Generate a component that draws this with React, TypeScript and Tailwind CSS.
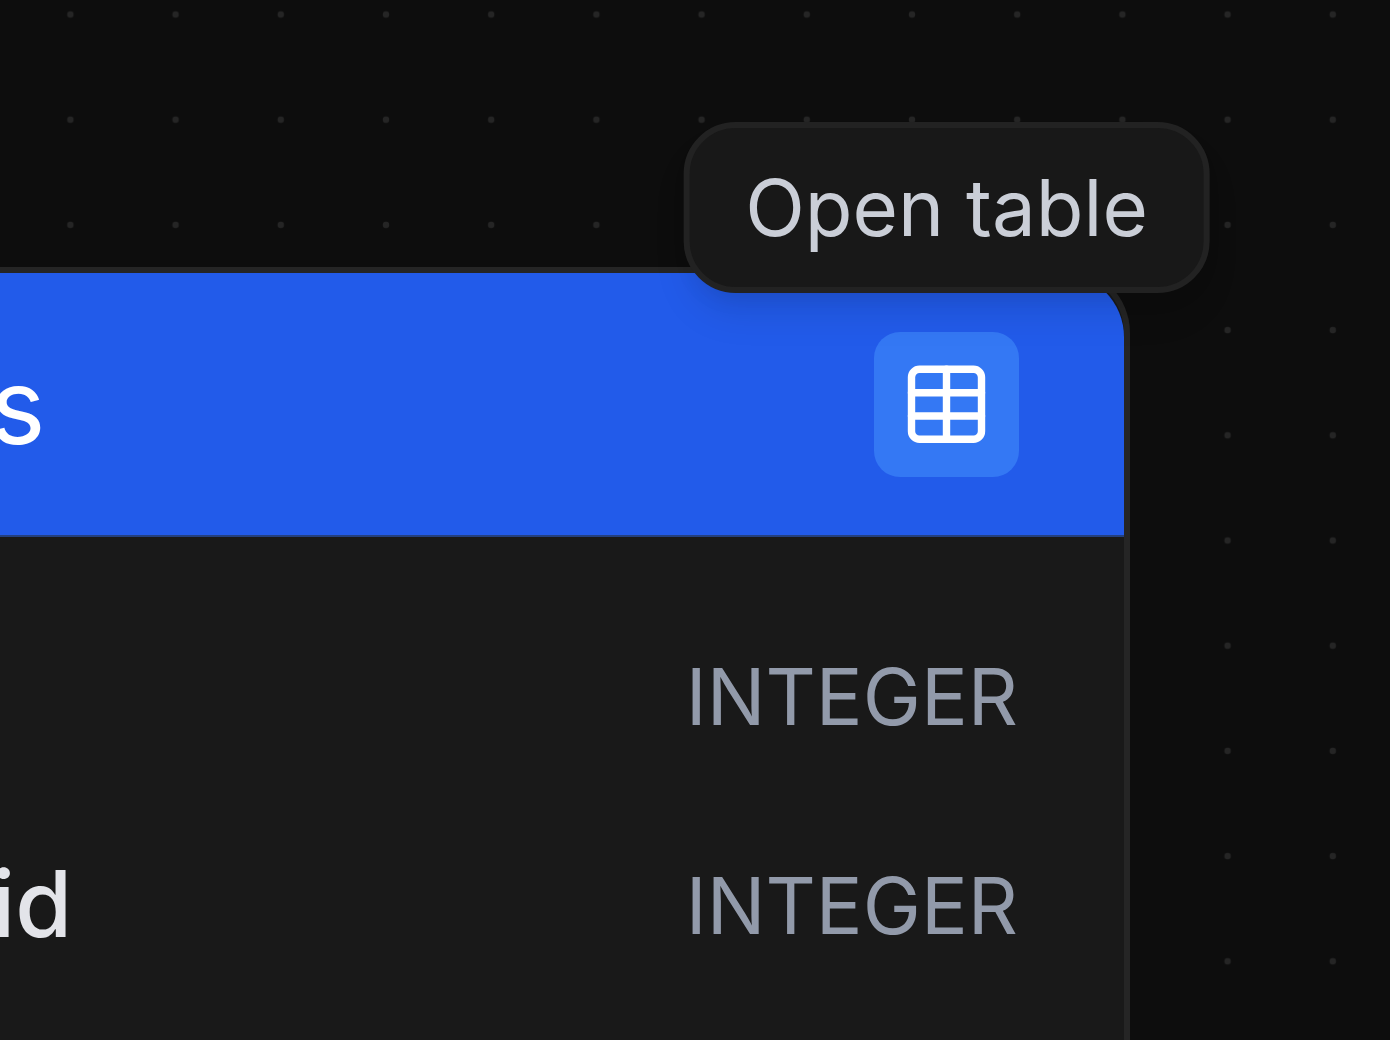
import React from "react";

interface Column {
  id: number;
  name: string;
  type: string;
}

const columns: Column[] = [
  { id: 1, name: "", type: "INTEGER" },
  { id: 2, name: "id", type: "INTEGER" },
];

// Dotted canvas behind the table nodes
const CanvasDots: React.FC = () => (
  <svg className="absolute inset-0 h-full w-full" aria-hidden="true">
    <defs>
      <pattern
        id="dots"
        x="17.8"
        y="-38.1"
        width="105.2"
        height="105.2"
        patternUnits="userSpaceOnUse"
      >
        <circle cx="52.6" cy="52.6" r="3.2" fill="#252525" />
      </pattern>
    </defs>
    <rect width="100%" height="100%" fill="url(#dots)" />
  </svg>
);

const TableIcon: React.FC = () => (
  <svg
    className="h-20 w-20"
    viewBox="0 0 80 80"
    fill="none"
    stroke="currentColor"
    strokeWidth="7.4"
    strokeLinecap="round"
    aria-hidden="true"
  >
    <rect x="4.5" y="5.3" width="70" height="70" rx="8" />
    <path d="M39.5 5.3v70M4.5 28.7h70M4.5 52h70" />
  </svg>
);

/**
 * Button in the node header, with its tooltip shown above it.
 */
const OpenTableButton: React.FC = () => (
  <div className="relative flex">
    <button
      type="button"
      aria-describedby="open-table-tip"
      aria-label="Open table"
      className="flex h-[145px] w-[145px] items-center justify-center rounded-[26px] bg-[#3478f4] text-white"
    >
      <TableIcon />
    </button>
    <div
      id="open-table-tip"
      role="tooltip"
      className="absolute bottom-full left-1/2 mb-[39px] flex h-[171px] w-max -translate-x-1/2 items-center rounded-[52px] border-6 border-[#222222] bg-[#181818] px-14 text-[78px] leading-[105px] text-[#caced7] shadow-[0_26px_39px_-7px_rgba(0,0,0,0.1),0_13px_26px_-13px_rgba(0,0,0,0.1)]"
    >
      Open table
    </div>
  </div>
);

const App: React.FC = () => {
  return (
    <main className="relative flex h-screen flex-col overflow-hidden bg-[#0d0d0d] pt-[267px] pr-[260px] font-[Inter,sans-serif]">
      <CanvasDots />
      <section className="relative -ml-[64px] flex flex-1 flex-col rounded-tr-[66px] border-6 border-b-0 border-[#252525] bg-[#191919]">
        <header className="flex h-[264px] items-center justify-between rounded-tr-[64px] border-b-2 border-[#24407f] bg-[#225bea] pr-[105px] pl-12">
          <h2 className="pt-1 text-[105px] leading-[158px] text-white">s</h2>
          <OpenTableButton />
        </header>
        <ul className="pt-[55px]">
          {columns.map((column) => (
            <li
              key={column.id}
              className="flex h-[209px] items-center justify-between pr-[106px] pl-[50px]"
            >
              <span className="pb-1 text-[92px] leading-[132px] font-medium text-[#e3e4e9]">
                {column.name}
              </span>
              <span className="text-[78px] leading-[105px] text-[#929aaa]">
                {column.type}
              </span>
            </li>
          ))}
        </ul>
      </section>
    </main>
  );
};

export default App;
